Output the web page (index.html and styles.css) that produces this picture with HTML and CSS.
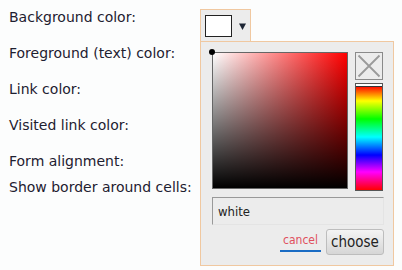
FILE: index.html
```html
<!DOCTYPE html>
<html lang="en">
<head>
    <meta charset="UTF-8">
    <title>Color settings</title>
    <link rel="stylesheet" href="styles.css">
</head>
<body>
    <div class="settings">
        <div class="row">
            <span class="label">Background color:</span>
            <div class="picker">
                <button class="picker-btn">
                    <span class="swatch"></span>
                    <svg class="caret" width="7" height="7" viewBox="0 0 7 7"><path d="M0 0.5 H7 L3.5 7 Z" fill="#1c2433"/></svg>
                </button>

                <!-- open colour popup -->
                <div class="popup">
                    <div class="popup-top">
                        <div class="sv-box">
                            <span class="sv-dot"></span>
                        </div>
                        <div class="side">
                            <div class="clear-box">
                                <svg width="26" height="26" viewBox="0 0 26 26"><path d="M2.5 2.5 L23.5 23.5 M23.5 2.5 L2.5 23.5" stroke="#9a9a9a" stroke-width="1.8"/></svg>
                            </div>
                            <div class="hue-bar">
                                <span class="hue-mark"></span>
                            </div>
                        </div>
                    </div>
                    <input class="color-input" type="text" value="white">
                    <div class="actions">
                        <a class="cancel" href="#">cancel</a>
                        <button class="choose">choose</button>
                    </div>
                </div>
            </div>
        </div>
        <div class="row"><span class="label">Foreground (text) color:</span></div>
        <div class="row"><span class="label">Link color:</span></div>
        <div class="row"><span class="label">Visited link color:</span></div>
        <div class="row short"><span class="label">Form alignment:</span></div>
        <div class="row short"><span class="label">Show border around cells:</span></div>
    </div>
</body>
</html>
```

FILE: styles.css
```css
html, body {
    min-height: 270px;
}

body {
    margin: 0;
    background-color: #fcfdfd;
    font-family: "DejaVu Sans", Verdana, sans-serif;
    color: #1e2030;
}

.settings {
    padding: 9px 0 0 9px;
}

.row {
    display: flex;
    height: 36px;
}

.row.short {
    height: 26px;
}

.label {
    width: 191px;
    font-size: 14px;
    line-height: 17px;
}

.picker {
    position: relative;
}

.picker-btn {
    display: flex;
    align-items: center;
    gap: 7px;
    width: 51px;
    height: 32px;
    padding: 0 0 0 4px;
    margin: 0;
    background-color: #ececec;
    border: 1px solid #f0c8a0;
    border-bottom: none;
    cursor: pointer;
}

.swatch {
    width: 25px;
    height: 20px;
    background-color: white;
    border: 1px solid #222;
}

.caret {
    margin-top: 1px;
}

/* popup uses the narrower face */
.popup {
    position: absolute;
    top: 32px;
    left: 0;
    width: 171px;
    height: 213px;
    padding: 10px 10px 0 11px;
    background-color: #ececec;
    border: 1px solid #f0c8a0;
    font-family: "DejaVu Sans Condensed", "DejaVu Sans", sans-serif;
    font-stretch: condensed;
    z-index: 2;
}

.popup-top {
    display: flex;
    gap: 7px;
}

.sv-box {
    position: relative;
    width: 135px;
    height: 135px;
    border: 1px solid #666;
    background: linear-gradient(to top, #000, rgba(0, 0, 0, 0)),
                linear-gradient(to right, #fff, #f00);
}

.sv-dot {
    position: absolute;
    top: -4px;
    left: -4px;
    width: 6px;
    height: 6px;
    border-radius: 50%;
    background-color: #000;
}

.side {
    display: flex;
    flex-direction: column;
    gap: 3px;
}

.clear-box {
    width: 26px;
    height: 26px;
    border: 1px solid #8a8a8a;
}

.clear-box svg {
    display: block;
}

.hue-bar {
    position: relative;
    width: 26px;
    height: 106px;
    border: 1px solid #555;
    background: linear-gradient(to bottom, #f00 2%, #ff0 16%, #0f0 33%, #0ff 50%, #00f 67%, #f0f 83%, #f00 100%);
}

.hue-mark {
    position: absolute;
    top: 0;
    left: 0;
    right: 0;
    height: 2px;
    background-color: #fff;
    border-bottom: 1px solid #333;
}

.color-input {
    display: block;
    box-sizing: border-box;
    width: 172px;
    height: 28px;
    margin-top: 6px;
    padding: 0 5px;
    background-color: #ececec;
    border: 1px solid #e4e4e4;
    border-top-color: #999;
    border-left-color: #999;
    font-family: inherit;
    font-stretch: condensed;
    font-size: 13px;
    color: #222;
    outline: none;
}

.actions {
    display: flex;
    justify-content: flex-end;
    align-items: center;
    gap: 5px;
    margin-top: 4px;
}

.cancel {
    padding: 0 3px 3px;
    border-bottom: 2px solid #1a6cc4;
    color: #e0505e;
    font-size: 12px;
    text-decoration: none;
}

.choose {
    width: 58px;
    height: 26px;
    margin: 0 -1px 0 0;
    padding: 0;
    background: linear-gradient(to bottom, #f4f4f4, #d6d6d6);
    border: 1px solid #bdbdbd;
    border-radius: 3px;
    color: #222;
    font-family: inherit;
    font-stretch: condensed;
    font-size: 15px;
    cursor: pointer;
}
```
